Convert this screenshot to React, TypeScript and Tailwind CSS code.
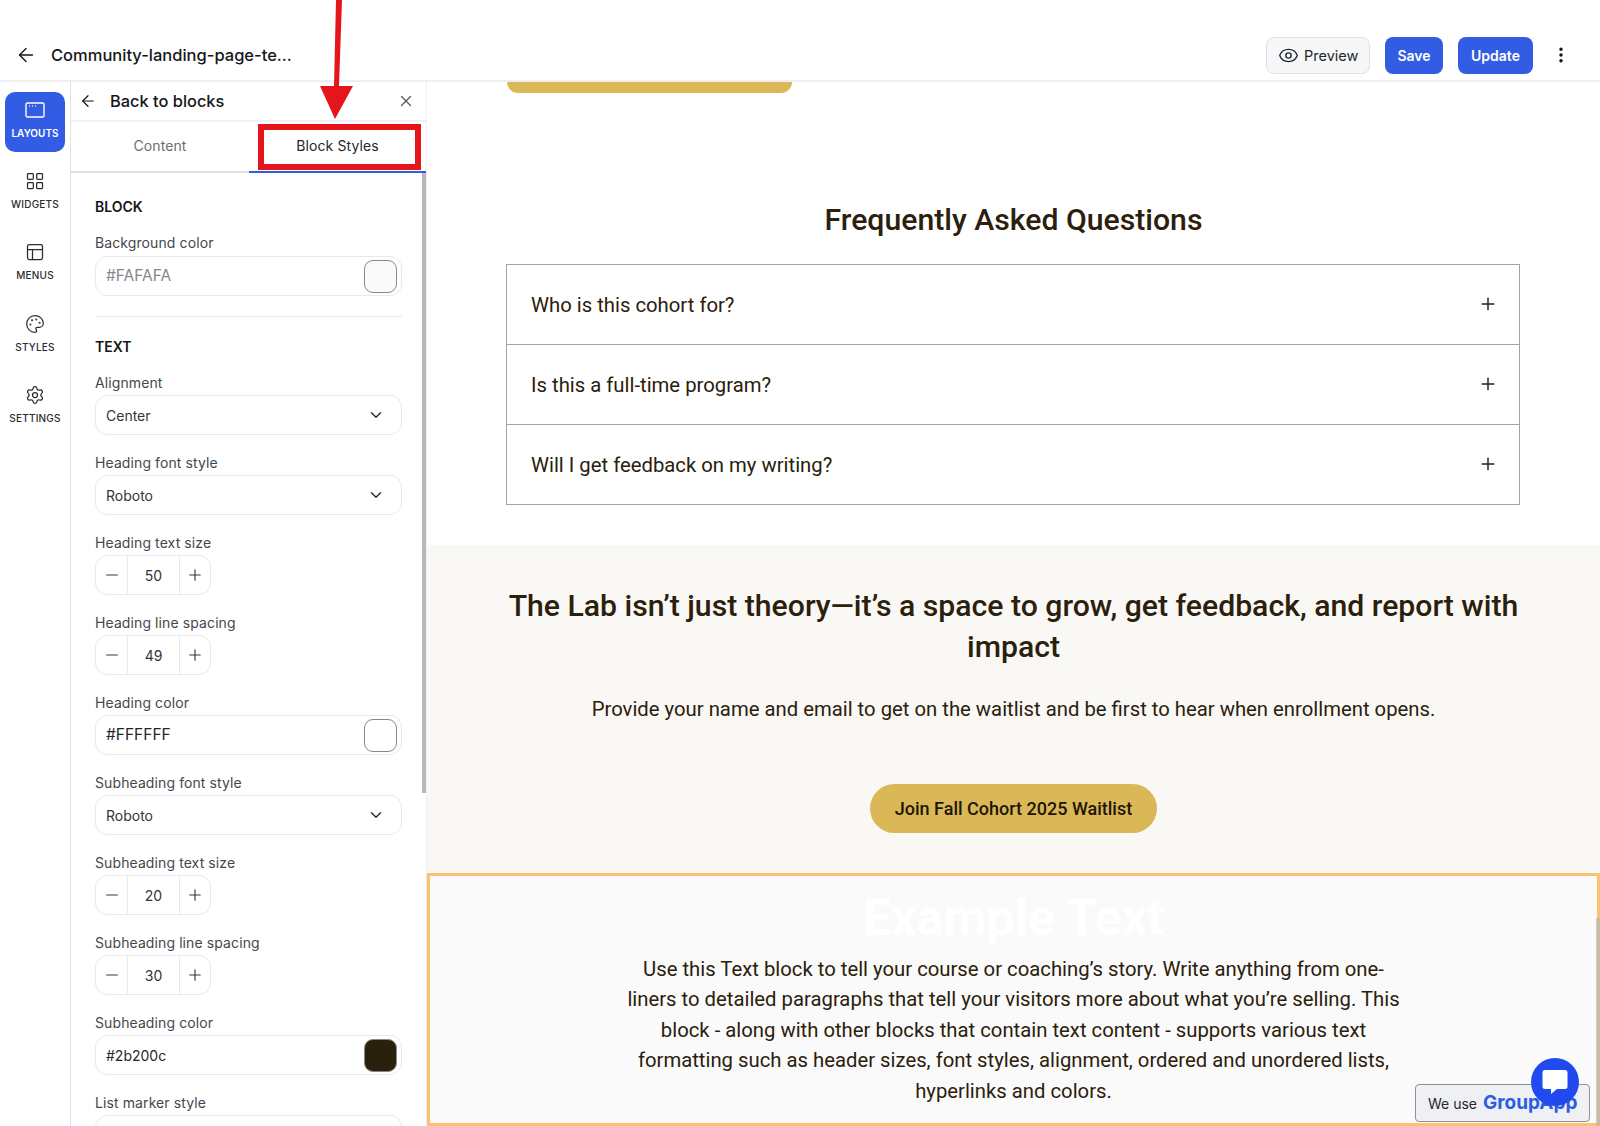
import { ArrowLeft, ChevronDown, Eye, LayoutGrid, Minus, MoreVertical, PanelsTopLeft, Palette, Plus, Settings, X } from "lucide-react"
import React from "react"

const railItems = [
    { label: "WIDGETS", icon: <LayoutGrid size={20} strokeWidth={1.5} /> },
    { label: "MENUS", icon: <PanelsTopLeft size={20} strokeWidth={1.5} /> },
    { label: "STYLES", icon: <Palette size={20} strokeWidth={1.5} /> },
    { label: "SETTINGS", icon: <Settings size={20} strokeWidth={1.5} /> },
]

function Label({ children, gapClass = "mb-[2px]" }: { children: React.ReactNode; gapClass?: string }) {
    return <div className={`h-[20px] text-[14px] leading-[20px] tracking-[0.1px] text-[#45474d] ${gapClass}`}>{children}</div>
}

function ColorField({ label, value, swatch, valueClass, gapClass }: { label: string; value: string; swatch: string; valueClass: string; gapClass?: string }) {
    return (
        <div className="mb-[18px]">
            <Label gapClass={gapClass}>{label}</Label>
            <div className="flex items-center justify-between h-[40px] pl-[10px] pr-[4px] rounded-[12px] border border-[#e8e9ec]">
                <span className={valueClass}>{value}</span>
                <span className={`w-[33px] h-[33px] rounded-[9px] border border-[#85878c] ${swatch}`} />
            </div>
        </div>
    )
}

function SelectField({ label, value }: { label: string; value: string }) {
    return (
        <div className="mb-[18px]">
            <Label>{label}</Label>
            <div className="flex items-center justify-between h-[40px] pl-[10px] pr-[16px] rounded-[12px] border border-[#e8e9ec]">
                <span className="text-[14px] text-[#33353a]">{value}</span>
                <ChevronDown size={18} strokeWidth={1.75} className="text-[#25272b]" />
            </div>
        </div>
    )
}

function StepperField({ label, value }: { label: string; value: string }) {
    return (
        <div className="mb-[18px]">
            <Label>{label}</Label>
            <div className="flex items-center w-[116px] h-[40px] rounded-[12px] border border-[#e8e9ec] text-[#33353a]">
                <span className="flex items-center justify-center w-[32px] h-full border-r border-[#e8e9ec]">
                    <Minus size={18} strokeWidth={1.5} />
                </span>
                <span className="flex items-center justify-center w-[52px] h-full text-[14px] border-r border-[#e8e9ec]">{value}</span>
                <span className="flex items-center justify-center w-[30px] h-full">
                    <Plus size={18} strokeWidth={1.5} />
                </span>
            </div>
        </div>
    )
}

function FaqRow({ text, rowClass }: { text: string; rowClass: string }) {
    return (
        <div className={`flex items-center justify-between pl-[24px] pr-[21px] ${rowClass}`}>
            <span className="pt-[2px] text-[20.3px]">{text}</span>
            <Plus size={20} strokeWidth={1.75} className="mb-[2px]" />
        </div>
    )
}

export default function App() {
    return (
        <div className="relative flex flex-col w-[1600px] h-[1126px] overflow-hidden bg-white font-[family-name:Inter,sans-serif] text-[#14161a]">
            <header className="flex items-center justify-between h-[82px] pt-[30px] pl-[15px] pr-[29px] border-b-2 border-[#eeeff1] shrink-0">
                <div className="flex items-center gap-[14px]">
                    <ArrowLeft size={22} strokeWidth={1.5} />
                    <span className="text-[16.5px] font-medium">Community-landing-page-te...</span>
                </div>
                <div className="flex items-center">
                    <button className="flex items-center gap-[5px] w-[104px] h-[37px] pl-[11px] rounded-[8px] border border-[#dfe0e3] bg-[#f6f7f9] text-[14.5px] text-[#25272b]">
                        <Eye size={21} strokeWidth={1.6} />
                        <span className="pt-[1px]">Preview</span>
                    </button>
                    <button className="ml-[15px] w-[58px] h-[37px] rounded-[8px] bg-[#335ce5] text-white text-[14px] font-semibold">Save</button>
                    <button className="ml-[15px] w-[75px] h-[37px] rounded-[8px] bg-[#335ce5] text-white text-[14px] font-semibold">Update</button>
                    <MoreVertical size={20} strokeWidth={2.2} className="ml-[18px]" />
                </div>
            </header>

            <div className="flex flex-1 min-h-0">
                <nav className="flex flex-col items-center w-[71px] shrink-0 border-r border-[#dfe1ea] pt-[10px]">
                    <div className="flex flex-col items-center w-[60px] h-[60px] rounded-[10px] bg-[#335ce5] text-white pt-[10px]">
                        <svg width="20" height="16" viewBox="0 0 20 16" fill="none" stroke="currentColor" strokeWidth="1.4">
                            <rect x="1" y="1" width="18" height="14" rx="1.5" />
                            <path d="M4 4h.8M7 4h.8M10 4h.8" />
                        </svg>
                        <span className="mt-[8px] text-[10px] font-semibold leading-[14px]">LAYOUTS</span>
                    </div>
                    <div className="flex flex-col items-center gap-[57.4px] mt-[19px]">
                        {railItems.map((item) => (
                            <div key={item.label} className="relative flex justify-center w-[61px] h-[14px] text-[#2a2c30]">
                                {item.icon}
                                <span className="absolute top-[26px] text-[10px] font-medium leading-[14px] tracking-[0.2px]">{item.label}</span>
                            </div>
                        ))}
                    </div>
                </nav>

                <aside className="relative flex flex-col w-[356px] shrink-0 border-r border-[#eeeff1]">
                    <div className="flex items-center justify-between h-[40px] pl-[8px] pr-[11px] border-b-2 border-[#f1f1f3] shrink-0">
                        <div className="flex items-center gap-[13px]">
                            <ArrowLeft size={18} strokeWidth={1.6} />
                            <span className="text-[16.4px] font-medium">Back to blocks</span>
                        </div>
                        <X size={18} strokeWidth={1.6} className="text-[#55575c]" />
                    </div>
                    <div className="flex h-[51px] pb-[2px] text-[14px] tracking-[0.1px] shrink-0 border-b-2 border-[#dfe1ea]">
                        <div className="flex items-center justify-center w-[178px] text-[#6b6d72]">Content</div>
                        <div className="relative flex items-center justify-center flex-1 text-[#25272b]">
                            Block Styles
                            <span className="absolute left-0 right-0 -bottom-[4px] h-[2px] bg-[#335ce5]" />
                        </div>
                    </div>
                    <div className="pl-[24px] pr-[24px] pt-[24px]">
                        <div className="h-[20px] text-[14px] leading-[20px] font-semibold mb-[16px]">BLOCK</div>
                        <ColorField label="Background color" value="#FAFAFA" swatch="bg-[#fafafa]" valueClass="text-[15.5px] text-[#85878c]" gapClass="mb-[3px]" />
                        <div className="h-px bg-[#e8e9ec] mt-[20px] mb-[20px]" />
                        <div className="h-[20px] text-[14px] leading-[20px] font-semibold mb-[16px]">TEXT</div>
                        <SelectField label="Alignment" value="Center" />
                        <SelectField label="Heading font style" value="Roboto" />
                        <StepperField label="Heading text size" value="50" />
                        <StepperField label="Heading line spacing" value="49" />
                        <ColorField label="Heading color" value="#FFFFFF" swatch="bg-white" valueClass="text-[15.5px] text-[#25272b]" />
                        <SelectField label="Subheading font style" value="Roboto" />
                        <StepperField label="Subheading text size" value="20" />
                        <StepperField label="Subheading line spacing" value="30" />
                        <ColorField label="Subheading color" value="#2b200c" swatch="bg-[#2b200c]" valueClass="text-[14px] text-[#25272b]" />
                        <Label>List marker style</Label>
                        <div className="h-[40px] rounded-[12px] border border-[#e8e9ec]" />
                    </div>
                    <div className="absolute right-0 top-[91px] w-[4px] h-[620px] bg-[#b8b8b8]" />
                </aside>

                <main className="relative flex-1 min-w-0 overflow-hidden font-[family-name:Roboto,sans-serif] text-[#2b200c]">
                    <section className="h-[463px] bg-white">
                        <div className="ml-[80px] w-[285px] h-[11px] rounded-b-[24px] bg-[#dab857]" />
                        <h2 className="mt-[107px] text-center text-[30.2px] leading-[40px] font-medium">Frequently Asked Questions</h2>
                        <div className="ml-[79px] mt-[24px] w-[1014px] border border-[#a3a3a3]">
                            <FaqRow text="Who is this cohort for?" rowClass="h-[80px] border-b border-[#a3a3a3]" />
                            <FaqRow text="Is this a full-time program?" rowClass="h-[80px] border-b border-[#a3a3a3]" />
                            <FaqRow text="Will I get feedback on my writing?" rowClass="h-[79px]" />
                        </div>
                    </section>
                    <section className="flex flex-col items-center h-[328px] bg-[#faf8f5] pt-[41px]">
                        <h2 className="w-[1020px] text-center text-[30.2px] leading-[40.5px] font-medium">
                            The Lab isn’t just theory—it’s a space to grow, get feedback, and report with impact
                        </h2>
                        <p className="mt-[28px] text-[20.3px] leading-[28px]">
                            Provide your name and email to get on the waitlist and be first to hear when enrollment opens.
                        </p>
                        <button className="mt-[61px] w-[287px] h-[49px] rounded-full bg-[#dab857] text-[18px] font-medium text-[#1d1608]">
                            Join Fall Cohort 2025 Waitlist
                        </button>
                    </section>
                    <section className="flex flex-col items-center h-[253px] bg-[#fafafa] border-[3px] border-[#fcc273]">
                        <h2 className="mt-[12px] h-[60px] text-[50px] leading-[60px] font-bold text-white">Example Text</h2>
                        <p className="mt-[6px] w-[775px] text-center text-[20.3px] leading-[30.4px]">
                            Use this Text block to tell your course or coaching’s story. Write anything from one-liners to detailed paragraphs that tell your visitors more about what you’re selling. This block - along with other blocks that contain text content - supports various text formatting such as header sizes, font styles, alignment, ordered and unordered lists, hyperlinks and colors.
                        </p>
                    </section>
                    <div className="absolute right-0 bottom-0 w-[4px] h-[208px] bg-[#b8b8b8]/70" />
                </main>
            </div>

            {/* red annotation on top of the tab */}
            <div className="absolute left-[258px] top-[124px] w-[163px] h-[46px] border-[6px] border-[#e5151c]" />
            <svg className="absolute left-[310px] top-0" width="50" height="122" viewBox="0 0 50 122">
                <path d="M26 0L32 0L29 86L43 86L25 119L10 86L24 86Z" fill="#e5151c" />
            </svg>

            <div className="absolute left-[1415px] top-[1084px] flex items-center gap-[6px] w-[175px] h-[38px] pl-[12px] rounded-[4px] border border-[#8e9094] bg-[#eff0f3]">
                <span className="text-[14px] text-[#25272b]">We use</span>
                <span className="text-[19px] font-bold text-[#2b5ce6]">GroupApp</span>
            </div>
            <div className="absolute left-[1531px] top-[1058px] flex items-center justify-center w-[48px] h-[48px] rounded-full bg-[#2149f0]">
                <svg width="26" height="26" viewBox="0 0 26 26" fill="white">
                    <path d="M3 1h20a2.500 2.500 0 0 1 2.500 2.500v14a2.500 2.500 0 0 1-2.500 2.500H15l-6 5v-5H3a2.500 2.500 0 0 1-2.500-2.500v-14A2.500 2.500 0 0 1 3 1z" />
                </svg>
            </div>
        </div>
    )
}
